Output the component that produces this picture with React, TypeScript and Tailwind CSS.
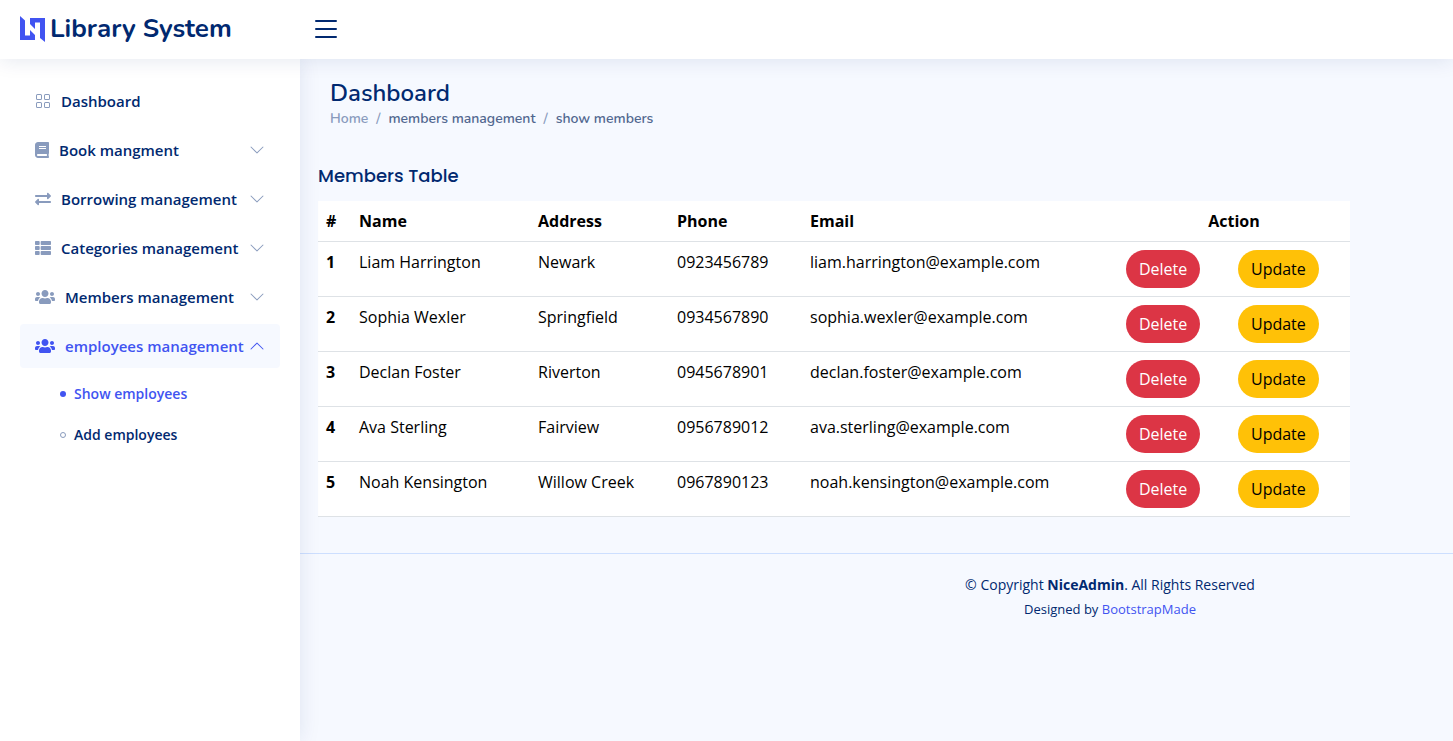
import { BsGrid, BsChevronDown, BsChevronUp } from "react-icons/bs";
import { FaBook, FaExchangeAlt, FaThList, FaUsers } from "react-icons/fa";
import type { IconType } from "react-icons";

const NAV: { label: string; icon: IconType; iconWidth: string; group: boolean }[] = [
  { label: "Dashboard", icon: BsGrid, iconWidth: "w-4", group: false },
  { label: "Book mangment", icon: FaBook, iconWidth: "w-[14px]", group: true },
  { label: "Borrowing management", icon: FaExchangeAlt, iconWidth: "w-4", group: true },
  { label: "Categories management", icon: FaThList, iconWidth: "w-4", group: true },
  { label: "Members management", icon: FaUsers, iconWidth: "w-5", group: true },
];

const MEMBERS = [
  { name: "Liam Harrington", address: "Newark", phone: "0923456789", email: "liam.harrington@example.com" },
  { name: "Sophia Wexler", address: "Springfield", phone: "0934567890", email: "sophia.wexler@example.com" },
  { name: "Declan Foster", address: "Riverton", phone: "0945678901", email: "declan.foster@example.com" },
  { name: "Ava Sterling", address: "Fairview", phone: "0956789012", email: "ava.sterling@example.com" },
  { name: "Noah Kensington", address: "Willow Creek", phone: "0967890123", email: "noah.kensington@example.com" },
];

function Logo() {
  return (
    <svg viewBox="0 0 25 26" className="h-[26px] w-[25px] shrink-0" fill="#4154f1" aria-hidden="true">
      <path d="M0 0 5 4.500V19.500H10V14L15 19V24H0Z" />
      <path d="M10 2H25V26L20 22V6.500H15V13L10 8Z" />
    </svg>
  );
}

function Header() {
  return (
    <header className="relative z-20 flex h-[59px] items-center bg-white px-5 pb-[2px] shadow-[0_2px_20px_rgba(1,41,112,0.1)]">
      <a href="#" className="flex w-[280px] items-center gap-[5px] text-[#012970]">
        <Logo />
        <span className="font-[Nunito,'Open_Sans',sans-serif] text-[26px] leading-8 font-bold whitespace-nowrap">Library System</span>
      </a>
      <button type="button" aria-label="Toggle sidebar" className="ml-[10px] text-[#012970]">
        <svg viewBox="0 0 32 32" className="size-8" stroke="currentColor" strokeWidth="2" strokeLinecap="round" aria-hidden="true">
          <path d="M6 8H26M6 16H26M6 24H26" />
        </svg>
      </button>
    </header>
  );
}

function Sidebar() {
  return (
    <aside className="relative z-10 w-[300px] shrink-0 bg-white p-5 shadow-[0_0_20px_rgba(1,41,112,0.1)]">
      <nav>
        <ul className="flex flex-col gap-[5px] text-[15px] leading-6 font-semibold text-[#012970]">
          {NAV.map(({ label, icon: Icon, iconWidth, group }) => (
            <li key={label}>
              <a href="#" className="flex items-center rounded px-[15px] py-[10px] whitespace-nowrap">
                <Icon className={`mr-[10px] h-4 shrink-0 text-[#899bbd] ${iconWidth}`} />
                <span>{label}</span>
                {group && <BsChevronDown className="ml-auto size-4 shrink-0 text-[#899bbd]" />}
              </a>
            </li>
          ))}
          <li>
            <a href="#" className="flex items-center rounded bg-[#f6f9ff] px-[15px] py-[10px] whitespace-nowrap text-[#4154f1]">
              <FaUsers className="mr-[10px] h-4 w-5 shrink-0" />
              <span>employees management</span>
              <BsChevronUp className="ml-auto size-4 shrink-0" />
            </a>
            <ul className="pt-[5px] text-sm leading-[21px]">
              <li>
                <a href="#" className="flex items-center gap-2 py-[10px] pl-10 text-[#4154f1]">
                  <span className="size-[6px] rounded-full bg-[#4154f1]" />
                  Show employees
                </a>
              </li>
              <li>
                <a href="#" className="flex items-center gap-2 py-[10px] pl-10">
                  <span className="size-[6px] rounded-full border border-[#899bbd]" />
                  Add employees
                </a>
              </li>
            </ul>
          </li>
        </ul>
      </nav>
    </aside>
  );
}

function MembersTable() {
  return (
    <table className="w-full table-fixed bg-white text-left text-base text-black">
      <colgroup>
        <col className="w-[33px]" />
        <col className="w-[179px]" />
        <col className="w-[139px]" />
        <col className="w-[133px]" />
        <col />
        <col className="w-[112px]" />
        <col className="w-[120px]" />
      </colgroup>
      <thead>
        <tr className="border-b border-[#dee2e6]">
          <th scope="col" className="p-2">#</th>
          <th scope="col" className="p-2">Name</th>
          <th scope="col" className="p-2">Address</th>
          <th scope="col" className="p-2">Phone</th>
          <th scope="col" className="p-2">Email</th>
          <th scope="col" colSpan={2} className="p-2 text-center">Action</th>
        </tr>
      </thead>
      <tbody>
        {MEMBERS.map((m, i) => (
          <tr key={m.phone} className="border-b border-[#dee2e6] align-top">
            <th scope="row" className="p-2">{i + 1}</th>
            <td className="p-2">{m.name}</td>
            <td className="p-2">{m.address}</td>
            <td className="p-2">{m.phone}</td>
            <td className="p-2">{m.email}</td>
            <td className="p-2">
              <button type="button" className="block rounded-full bg-[#dc3545] px-[13px] py-[7px] text-white">Delete</button>
            </td>
            <td className="p-2">
              <button type="button" className="block rounded-full bg-[#ffc107] px-[13px] py-[7px] text-black">Update</button>
            </td>
          </tr>
        ))}
      </tbody>
    </table>
  );
}

export default function App() {
  return (
    <div className="flex min-h-screen flex-col bg-[#f6f9ff] font-['Open_Sans',sans-serif] text-[#444444]">
      <Header />
      <div className="flex flex-1">
        <Sidebar />
        <div className="min-w-0 flex-1">
          <main className="pt-5 pr-[103px] pb-9 pl-[18px]">
            <div className="pl-3 font-[Nunito,'Open_Sans',sans-serif]">
              <h1 className="text-2xl leading-[29px] font-semibold text-[#012970]">Dashboard</h1>
              <nav aria-label="Breadcrumb">
                <ol className="flex gap-2 text-sm leading-[21px] font-semibold text-[#51678f]">
                  <li><a href="#" className="text-[#899bbd]">Home</a></li>
                  <li className="text-[#899bbd]" aria-hidden="true">/</li>
                  <li>members management</li>
                  <li className="text-[#899bbd]" aria-hidden="true">/</li>
                  <li>show members</li>
                </ol>
              </nav>
            </div>
            <h2 className="pt-9 pb-[14px] font-[Poppins,Inter,sans-serif] text-lg leading-[22px] font-medium text-[#012970]">Members Table</h2>
            <MembersTable />
          </main>
          <footer className="border-t border-[#cddfff] py-5 pl-[467px] text-center text-sm text-[#012970]">
            <p className="leading-[21px]">© Copyright <strong>NiceAdmin</strong>. All Rights Reserved</p>
            <p className="pt-1 text-[13px] leading-5">Designed by <a href="#" className="text-[#4154f1]">BootstrapMade</a></p>
          </footer>
        </div>
      </div>
    </div>
  );
}
